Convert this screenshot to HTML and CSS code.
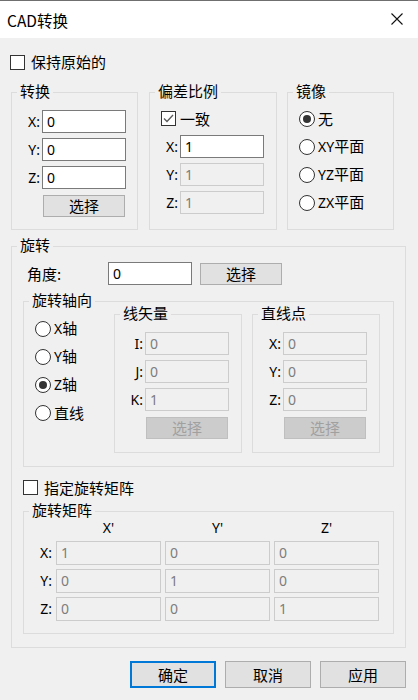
FILE: index.html
```html
<!DOCTYPE html>
<html lang="zh">
<head>
<meta charset="utf-8">
<title>CAD转换</title>
<link rel="stylesheet" href="styles.css">
</head>
<body>
<div class="window">
  <div class="titlebar">
    <span class="title">CAD转换</span>
    <svg class="close" width="12" height="12" viewBox="0 0 12 12"><path d="M0.5 0.5 L11.5 11.5 M11.5 0.5 L0.5 11.5" stroke="#111" stroke-width="1.1" fill="none"/></svg>
  </div>
  <div class="content">
    <div class="check-row top-check">
      <span class="cbox"></span><span>保持原始的</span>
    </div>

    <div class="top-groups">
      <div class="group g-convert">
        <span class="group-title">转换</span>
        <div class="field"><label>X:</label><span class="input">0</span></div>
        <div class="field"><label>Y:</label><span class="input">0</span></div>
        <div class="field"><label>Z:</label><span class="input">0</span></div>
        <span class="btn btn-inset">选择</span>
      </div>
      <div class="group g-scale">
        <span class="group-title">偏差比例</span>
        <div class="check-row small-row"><span class="cbox checked"><svg width="13" height="13" viewBox="0 0 13 13"><path d="M2 6.5 L5 9.5 L11 3" stroke="#5a5a5a" stroke-width="1.3" fill="none"/></svg></span><span>一致</span></div>
        <div class="field"><label>X:</label><span class="input">1</span></div>
        <div class="field"><label>Y:</label><span class="input disabled">1</span></div>
        <div class="field"><label>Z:</label><span class="input disabled">1</span></div>
      </div>
      <div class="group g-mirror">
        <span class="group-title">镜像</span>
        <div class="radio-row"><span class="radio on"></span><span>无</span></div>
        <div class="radio-row"><span class="radio"></span><span><span class="lat">XY</span>平面</span></div>
        <div class="radio-row"><span class="radio"></span><span><span class="lat">YZ</span>平面</span></div>
        <div class="radio-row"><span class="radio"></span><span><span class="lat">ZX</span>平面</span></div>
      </div>
    </div>

    <div class="group g-rotate">
      <span class="group-title">旋转</span>
      <div class="angle-row">
        <label>角度:</label><span class="input">0</span><span class="btn angle-btn">选择</span>
      </div>

      <div class="group g-axis">
        <span class="group-title">旋转轴向</span>
        <div class="axis-radios">
          <div class="radio-row"><span class="radio"></span><span><span class="lat">X</span>轴</span></div>
          <div class="radio-row"><span class="radio"></span><span><span class="lat">Y</span>轴</span></div>
          <div class="radio-row"><span class="radio on"></span><span><span class="lat">Z</span>轴</span></div>
          <div class="radio-row"><span class="radio"></span><span>直线</span></div>
        </div>
        <div class="group g-sub g-vec">
          <span class="group-title">线矢量</span>
          <div class="field"><label>I:</label><span class="input disabled">0</span></div>
          <div class="field"><label>J:</label><span class="input disabled">0</span></div>
          <div class="field"><label>K:</label><span class="input disabled">1</span></div>
          <span class="btn btn-inset btn-disabled">选择</span>
        </div>
        <div class="group g-sub g-pt">
          <span class="group-title">直线点</span>
          <div class="field"><label>X:</label><span class="input disabled">0</span></div>
          <div class="field"><label>Y:</label><span class="input disabled">0</span></div>
          <div class="field"><label>Z:</label><span class="input disabled">0</span></div>
          <span class="btn btn-inset btn-disabled">选择</span>
        </div>
      </div>

      <div class="check-row matrix-check">
        <span class="cbox"></span><span>指定旋转矩阵</span>
      </div>

      <div class="group g-matrix">
        <span class="group-title">旋转矩阵</span>
        <div class="matrix">
          <span></span><span class="mh">X'</span><span class="mh">Y'</span><span class="mh">Z'</span>
          <label>X:</label><span class="input disabled">1</span><span class="input disabled">0</span><span class="input disabled">0</span>
          <label>Y:</label><span class="input disabled">0</span><span class="input disabled">1</span><span class="input disabled">0</span>
          <label>Z:</label><span class="input disabled">0</span><span class="input disabled">0</span><span class="input disabled">1</span>
        </div>
      </div>
    </div>

    <div class="buttons">
      <span class="btn dlg-btn default">确定</span>
      <span class="btn dlg-btn">取消</span>
      <span class="btn dlg-btn">应用</span>
    </div>
  </div>
</div>
</body>
</html>
```

FILE: styles.css
```css
* { box-sizing: border-box; }
html, body { margin: 0; padding: 0; }
body {
  width: 418px;
  height: 700px;
  background: #f0f0f0;
  font-family: "Noto Sans CJK SC", "Noto Sans", sans-serif;
  font-size: 15px;
  color: #000;
  overflow: hidden;
}
.window { width: 418px; height: 700px; }
.titlebar {
  height: 38px;
  background: #fff;
  border-top: 1px solid #6f6f6f;
  display: flex;
  align-items: center;
  justify-content: space-between;
  padding: 0 15px 0 7px;
}
.title { font-size: 15.5px; line-height: 20px; }
.close { display: block; margin-top: -1px; }

.content { padding: 0 0 0 11px; }

.lat { font-family: "Noto Sans", sans-serif; font-size: 14px; }

/* checkbox */
.check-row { display: flex; align-items: center; height: 20px; line-height: 20px; }
.cbox {
  width: 15px; height: 15px;
  border: 1px solid #333;
  background: #fff;
  margin-right: 6px;
  display: flex; align-items: center; justify-content: center;
}
.top-check { margin-top: 14px; margin-left: -1px; }

/* group box */
.group {
  position: relative;
  border: 1px solid #dcdcdc;
}
.group-title {
  position: absolute;
  top: -12px;
  left: 5px;
  padding: 0 3px;
  line-height: 20px;
  background: #f0f0f0;
  white-space: nowrap;
}

.top-groups {
  display: flex;
  margin-top: 20px;
  height: 138px;
}
.g-convert { width: 127px; padding-top: 17px; display: flex; flex-direction: column; gap: 5px; }
.g-scale { width: 128px; margin-left: 11px; padding: 14px 0 0 0; display: flex; flex-direction: column; gap: 5px; }
.g-mirror { width: 107px; margin-left: 10px; padding: 14px 0 0 11px; display: flex; flex-direction: column; gap: 5px; }

.field { display: flex; align-items: center; height: 23px; }
.field label {
  width: 30px;
  text-align: right;
  padding-right: 2px;
  font-family: "Noto Sans", sans-serif;
  font-size: 14px;
  line-height: 20px;
}
.input {
  width: 84px;
  height: 23px;
  border: 1px solid #7a7a7a;
  background: #fff;
  padding-left: 4px;
  font-family: "Noto Sans", sans-serif;
  font-size: 14px;
  line-height: 21px;
  color: #000;
}
.input.disabled {
  border-color: #cccccc;
  background: #f0f0f0;
  color: #7d7d7d;
}

.btn {
  display: flex; align-items: center; justify-content: center;
  background: #e1e1e1;
  border: 1px solid #adadad;
  line-height: 20px;
}
.btn-inset { width: 82px; height: 22px; margin-left: 31px; margin-top: 1px; }
.btn-disabled { background: #cccccc; border-color: #bfbfbf; color: #a0a0a0; }

.small-row { padding-left: 11px; height: 23px; }
.small-row .cbox { margin-right: 4px; }

.radio-row { display: flex; align-items: center; height: 23px; line-height: 20px; }
.radio {
  width: 16px; height: 16px;
  border: 1px solid #333;
  border-radius: 50%;
  background: #fff;
  margin-right: 3px;
  display: flex; align-items: center; justify-content: center;
}
.radio.on::after {
  content: "";
  width: 8px; height: 8px;
  border-radius: 50%;
  background: #333;
}

/* rotate */
.g-rotate {
  margin-top: 16px;
  width: 395px;
  height: 402px;
  padding: 15px 0 0 0;
}
.angle-row { display: flex; align-items: center; height: 23px; }
.angle-row label { width: 96px; padding-left: 15px; }
.angle-btn { width: 82px; height: 22px; margin-left: 8px; }

.g-axis {
  margin: 16px 0 0 11px;
  width: 371px;
  height: 166px;
  display: flex;
  align-items: flex-start;
  padding: 12px 0 0 11px;
}
.axis-radios { display: flex; flex-direction: column; gap: 5px; width: 79px; margin-top: 3px; }
.g-sub { width: 128px; height: 139px; padding-top: 17px; display: flex; flex-direction: column; gap: 5px; }
.g-pt { margin-left: 10px; }

.matrix-check { margin: 10px 0 0 11px; height: 21px; }

.g-matrix {
  margin: 13px 0 0 11px;
  width: 371px;
  height: 123px;
  padding: 7px 0 0 0;
}
.matrix {
  display: grid;
  grid-template-columns: 28px 105px 105px 105px;
  grid-template-rows: 18px 24px 24px 24px;
  column-gap: 4px;
  row-gap: 4px;
  align-items: center;
}
.matrix > label {
  text-align: right;
  font-family: "Noto Sans", sans-serif;
  font-size: 14px;
  line-height: 20px;
}
.matrix .input { width: 105px; height: 24px; }
.mh { text-align: center; font-family: "Noto Sans", sans-serif; font-size: 14px; line-height: 18px; }

.buttons {
  display: flex;
  gap: 9px;
  margin: 13px 0 0 119px;
}
.dlg-btn { width: 86px; height: 27px; }
.dlg-btn.default { border: 2px solid #0078d7; }
```
